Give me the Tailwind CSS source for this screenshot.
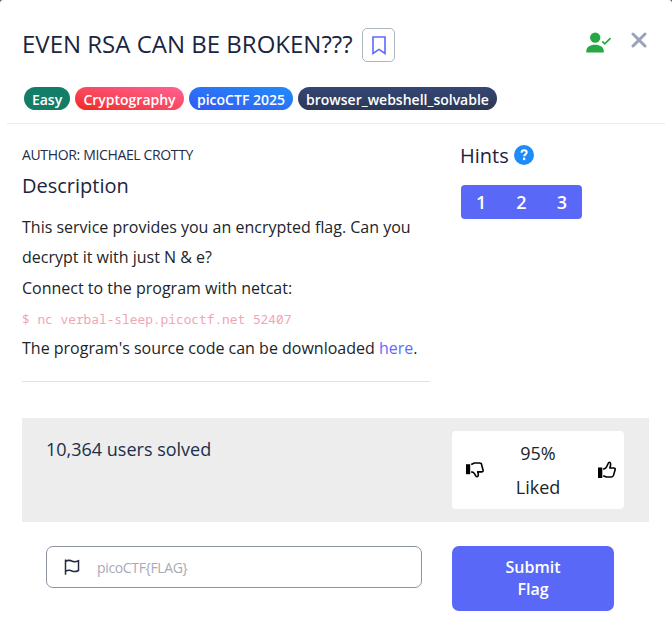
<!DOCTYPE html>
<html lang="en">
<head>
<meta charset="utf-8">
<title>EVEN RSA CAN BE BROKEN???</title>
<script src="https://cdn.jsdelivr.net/npm/@tailwindcss/browser@4"></script>
</head>
<body class="bg-[#4a4a4a]">
<main class="w-[672px] h-[623px] overflow-hidden bg-white rounded-t-[3px] font-['Open_Sans','Noto_Sans',sans-serif] text-[#212529]">
  <header class="mx-[7px] h-[124px] border-b border-[#e9ecef] pl-[15px] pr-[18px]">
    <div class="flex pt-[28px]">
      <h1 class="w-[340px] whitespace-nowrap text-[24px] leading-[31px] text-[#1b2540]">EVEN RSA CAN BE BROKEN???</h1>
      <button class="flex h-[34px] w-[33px] items-center justify-center rounded-[5px] border border-[#adb5bd]" aria-label="Bookmark">
        <svg class="h-[19px] w-[14px]" viewBox="0 0 14 19" fill="none" stroke="#5c6bf8" stroke-width="1.6"><path d="M1 1H13V17.4L7 13.4L1 17.4Z"/></svg>
      </button>
      <svg class="ml-auto mt-1 h-[22px] w-[26px]" viewBox="0 0 26 22" fill="#28a745"><circle cx="9.2" cy="5.6" r="5.2"/><path d="M.3 20.6V19.2C.3 15 4 12.7 9 12.7S17.8 15 17.8 19.2V20.6Z"/><path d="M16.2 9.3L18.8 11.8L24.5 6.2" fill="none" stroke="#28a745" stroke-width="1.7"/></svg>
      <svg class="ml-[19px] mt-[4px] h-4 w-4" viewBox="0 0 16 16" fill="none" stroke="#98a2b9" stroke-width="3" stroke-linecap="round"><path d="M2 2L14 14M14 2L2 14"/></svg>
    </div>
    <div class="mt-[25px] ml-[2px] flex gap-[5px] text-[14px] font-semibold leading-[25px] text-white">
      <span class="flex h-[23px] w-[46px] justify-center rounded-full bg-[#147d68]">Easy</span>
      <span class="flex h-[23px] w-[109px] justify-center rounded-full bg-linear-to-tr from-[#f22613] to-[#ff6095]">Cryptography</span>
      <span class="flex h-[23px] w-[104px] justify-center rounded-full bg-linear-to-tr from-[#3358f4] to-[#1d8cf8]">picoCTF 2025</span>
      <span class="flex h-[23px] w-[199px] justify-center rounded-full bg-linear-to-t from-[#2c3855] to-[#344675]">browser_webshell_solvable</span>
    </div>
  </header>
  <div class="flex h-[294px] pl-[22px]">
    <section class="h-[258px] w-[408px] border-b border-[#dee2e6] pt-[21px]">
      <p class="text-[14px] leading-[20px] tracking-[-0.35px] text-[#212d4a]">AUTHOR: MICHAEL CROTTY</p>
      <h2 class="mt-[8px] text-[20px] leading-[26px] text-[#1b2540]">Description</h2>
      <div class="mt-[13px] whitespace-nowrap text-[16px] leading-[30px]">
        <p class="h-[30px]">This service provides you an encrypted flag. Can you</p>
        <p class="h-[31px]">decrypt it with just N &amp; e?</p>
        <p class="h-[31px]">Connect to the program with netcat:</p>
        <p class="h-[29px] font-['Noto_Sans_Mono','DejaVu_Sans_Mono',monospace] text-[12.83px] text-[#f3a4b5]">$ nc verbal-sleep.picoctf.net 52407</p>
        <p>The program's source code can be downloaded <a href="#" class="text-[#5e6ef7]">here</a>.</p>
      </div>
    </section>
    <aside class="ml-[30px] pt-[18px]">
      <div class="flex">
        <h2 class="w-[54px] text-[20px] leading-[28px] text-[#1b2540]">Hints</h2>
        <svg class="mt-[3px] h-5 w-5" viewBox="0 0 20 20"><circle cx="10" cy="10" r="10" fill="#1d8cf8"/><path d="M7.5 7.8C7.6 6 8.7 5.3 10.1 5.3C11.7 5.3 12.7 6.2 12.7 7.5C12.7 9.3 10.2 9.4 10.2 11.2" fill="none" stroke="#fff" stroke-width="2"/><circle cx="10.1" cy="13.9" r="1.3" fill="#fff"/></svg>
      </div>
      <div class="mt-[15px] ml-px grid h-[34px] w-[121px] grid-cols-3 rounded-[4px] bg-[#5968f6] text-center text-[18px] font-semibold leading-[35px] text-white">
        <button>1</button><button>2</button><button>3</button>
      </div>
    </aside>
  </div>
  <section class="ml-[22px] flex h-[104px] w-[627px] justify-between bg-[#ededed] pt-[13px] pr-[25px] pl-6">
    <p class="pt-[5px] text-[18px] leading-[27px] text-[#212d4a]">10,364 users solved</p>
    <div class="flex h-[78px] w-[172px] items-center rounded-[4px] bg-white pr-[8px] pl-[14px]">
      <svg class="h-[18px] w-[18px]" viewBox="0 0 18 18" fill="none" stroke="#000" stroke-width="1.6" stroke-linejoin="round"><path d="M0 3.2H4.2V13.2H0Z" fill="#000" stroke="none"/><path d="M5.2 3.4L8.4 2H13.5C15 2 15.8 3 15.7 4.2L17.1 9.3C17.3 10.4 16.6 10.9 15.6 10.9H11.7C12.5 13 12.7 15.5 11 15.8C9.3 16 9.5 12.5 6.9 11.3L5.2 10.9"/></svg>
      <div class="w-[108px] text-center text-[18px] leading-[34px]">95%<br>Liked</div>
      <svg class="ml-auto h-[18px] w-[18px]" viewBox="0 0 18 18" fill="none" stroke="#000" stroke-width="1.6" stroke-linejoin="round"><path d="M0 6.5H4.3V17H0Z" fill="#000" stroke="none"/><path d="M5.2 8.2L7.4 7.3C9.8 5.7 9.7 1.3 11.2 1.3C13.1 1.3 12.8 4.7 11.8 7H15.8C17 7 17.4 7.6 17.1 8.7L15.6 14.1C15.3 15.2 14.8 16 13.4 16H8.4L5.2 14.7"/></svg>
    </div>
  </section>
  <form class="ml-[46px] flex gap-[30px] pt-6">
    <label class="flex h-[42px] w-[376px] items-center rounded-[7px] border border-[#8d93a0] pl-[17px]">
      <svg class="h-4 w-4" viewBox="0 0 16 16" fill="none" stroke="#222a42" stroke-width="1.5"><path d="M1.5 .5V15.8M1.5 2.2C4 1 6 1 8.5 2.3C10.5 3.2 12.5 2.7 14.5 1.8V11.5C12.2 12.8 10.2 13 8 12C6 11 4 11.1 1.5 12.2"/></svg>
      <input class="ml-[17px] w-[280px] text-[14px] tracking-[-0.35px] outline-none placeholder:text-[#a7abb5]" placeholder="picoCTF{FLAG}">
    </label>
    <button type="button" class="h-[65px] w-[162px] rounded-[7px] bg-[#5968f6] text-[16px] font-semibold leading-[21.6px] text-white">Submit<br>Flag</button>
  </form>
</main>
</body>
</html>
